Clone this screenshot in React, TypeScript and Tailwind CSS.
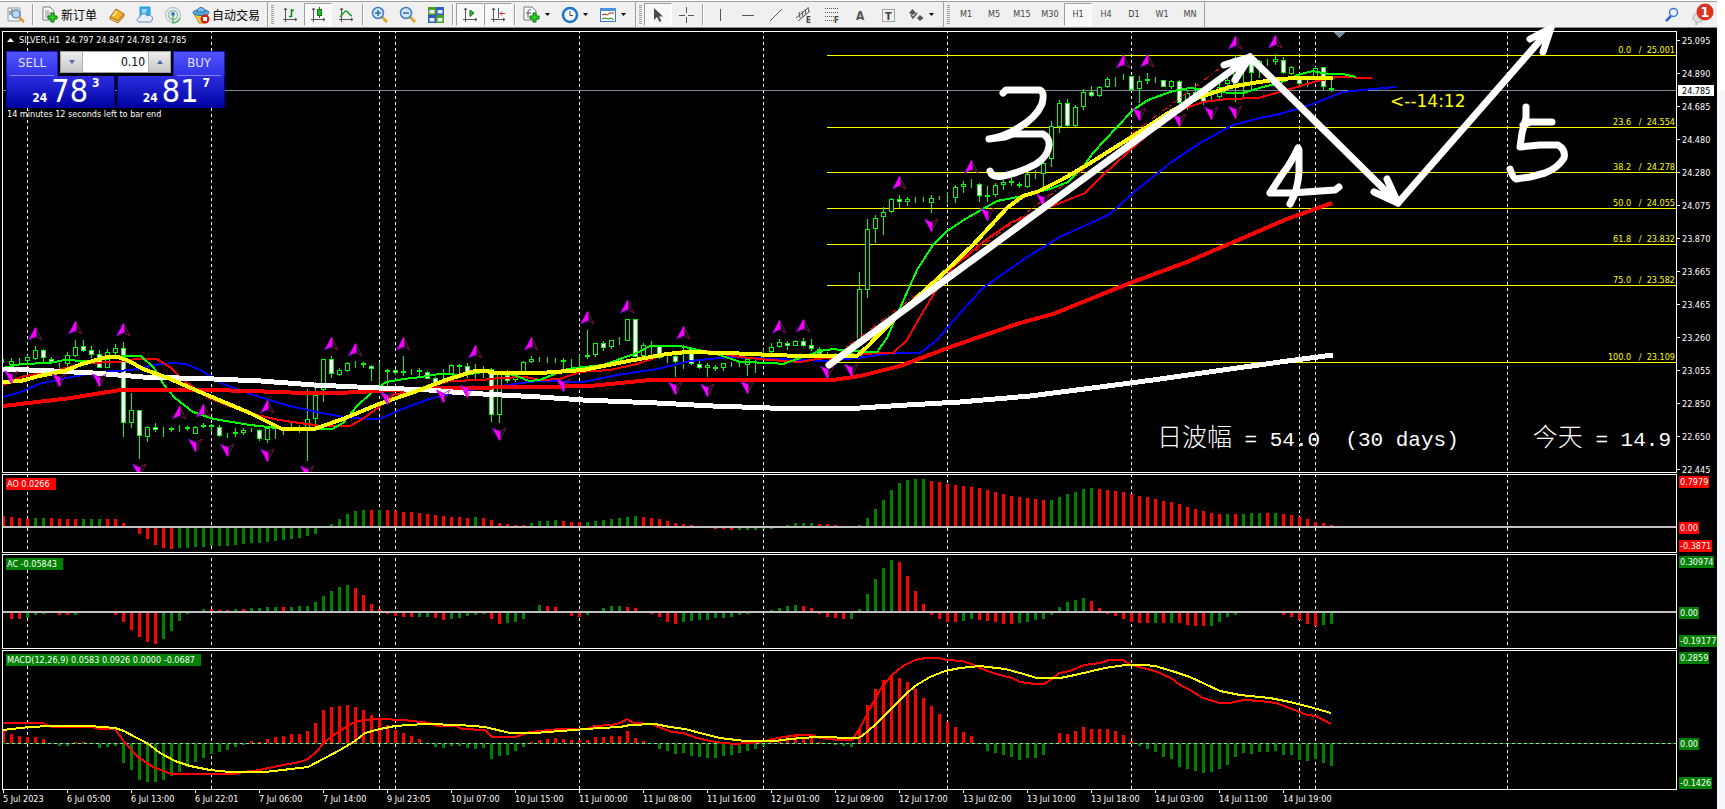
import type { ReactNode } from "react";

type Bar = [high: number, top: number, bottom: number, low: number, filled?: 1];

const STEP = 8;
const barX = (i: number) => 3 + STEP * i;

/**
 * Candles, grouped in runs. `y` is the pixel row a run is measured from, the
 * values inside a run are thirds of a pixel below that row.
 */
const RUNS: { from: number; y: number; bars: Bar[] }[] = [
  {
    from: 0,
    y: 300,
    bars: [
      [178, 184, 184, 190], [175, 184, 194, 200], [175, 184, 184, 190], [165, 172, 182, 190],
      [138, 151, 176, 180], [147, 151, 174, 190, 1], [170, 178, 187, 192, 1], [188, 190, 190, 208],
      [157, 166, 193, 197], [120, 141, 168, 170], [120, 138, 152, 157, 1], [138, 151, 164, 175, 1],
      [151, 163, 204, 205, 1], [147, 157, 203, 205], [133, 145, 158, 165], [126, 144, 368, 410, 1],
      [279, 331, 368, 385], [330, 331, 409, 476, 1], [378, 381, 412, 425], [370, 381, 389, 397, 1],
      [381, 390, 394, 410], [380, 385, 391, 397], [375, 385, 387, 395], [378, 381, 388, 392],
      [378, 381, 401, 402], [368, 375, 382, 384], [373, 376, 381, 395, 1], [376, 381, 409, 412, 1],
      [398, 404, 408, 415], [385, 397, 403, 410], [385, 390, 398, 405], [383, 387, 391, 395],
      [386, 389, 418, 422, 1], [380, 385, 421, 430], [388, 390, 390, 418], [385, 388, 388, 405],
      [370, 388, 388, 392], [375, 386, 390, 398], [268, 358, 388, 482], [245, 285, 358, 375],
      [178, 178, 270, 305], [168, 178, 221, 233, 1], [205, 210, 224, 228], [186, 189, 212, 215],
      [183, 190, 190, 205], [185, 188, 196, 205, 1], [195, 198, 208, 242, 1], [185, 213, 213, 265],
      [207, 211, 215, 262], [207, 210, 219, 225, 1], [167, 213, 219, 228], [207, 214, 214, 225],
      [204, 211, 216, 228, 1], [213, 216, 236, 238, 1], [230, 234, 248, 252, 1], [207, 220, 220, 245],
      [192, 195, 222, 222], [193, 196, 200, 225], [190, 198, 222, 235, 1], [192, 222, 222, 238],
      [198, 222, 222, 235], [205, 208, 344, 365, 1], [215, 220, 344, 368], [210, 225, 242, 250, 1],
      [213, 220, 240, 245], [183, 187, 220, 225], [167, 177, 187, 190], [170, 177, 177, 187],
      [172, 175, 178, 190], [173, 175, 178, 188],
    ],
  },
  {
    from: 70,
    y: 290,
    bars: [
      [205, 211, 217, 240], [207, 208, 210, 235], [195, 203, 206, 240], [120, 196, 202, 207],
      [159, 160, 196, 200], [153, 159, 173, 182, 1], [150, 151, 170, 176], [141, 154, 154, 165],
      [87, 88, 152, 152], [88, 88, 200, 200, 1], [160, 166, 198, 200], [152, 168, 168, 195],
      [165, 169, 205, 208, 1], [195, 203, 206, 218], [196, 199, 217, 260, 1], [165, 190, 190, 237],
      [170, 175, 222, 225, 1], [210, 223, 233, 238, 1], [220, 226, 235, 262], [225, 230, 236, 242, 1],
      [220, 220, 235, 243], [216, 221, 221, 230], [215, 219, 219, 230], [205, 208, 226, 258],
      [205, 210, 210, 248], [178, 188, 188, 210], [160, 172, 187, 188], [148, 157, 172, 173],
      [154, 158, 168, 180, 1], [150, 154, 167, 168], [144, 153, 169, 170, 1], [148, 164, 177, 182, 1],
      [172, 176, 192, 210, 1], [185, 190, 190, 200], [188, 190, 190, 205], [180, 188, 188, 205],
      [185, 188, 200, 205],
    ],
  },
  {
    from: 107,
    y: 30,
    bars: [
      [727, 778, 929, 935], [568, 596, 781, 805], [556, 563, 598, 638], [532, 545, 562, 614],
      [504, 508, 547, 548], [496, 508, 515, 533, 1], [501, 508, 517, 528], [501, 506, 506, 518],
      [501, 506, 506, 515], [496, 505, 520, 550], [498, 503, 503, 510], [485, 503, 503, 520],
      [465, 470, 505, 518], [454, 463, 472, 488], [447, 463, 463, 475], [460, 463, 499, 515, 1],
      [468, 496, 502, 517], [460, 466, 496, 500], [450, 455, 466, 480], [443, 454, 459, 468, 1],
      [455, 462, 468, 473, 1], [430, 433, 472, 473], [420, 431, 431, 448], [390, 400, 433, 475],
      [272, 287, 386, 410], [210, 219, 290, 310], [208, 220, 287, 290, 1], [225, 230, 287, 290],
      [177, 185, 230, 240], [168, 187, 199, 200, 1], [168, 172, 199, 200], [142, 146, 172, 175],
      [142, 149, 154, 170], [133, 147, 147, 150], [137, 139, 179, 182, 1], [138, 154, 178, 218],
      [130, 148, 154, 162], [142, 147, 147, 160], [150, 151, 170, 172, 1], [150, 154, 170, 178],
      [150, 153, 220, 222, 1], [180, 188, 215, 240], [160, 185, 205, 215, 1], [170, 180, 215, 225, 1],
      [180, 190, 190, 215], [160, 170, 200, 210], [140, 150, 163, 175], [75, 85, 170, 215],
      [130, 150, 150, 205], [80, 90, 128, 180, 1], [90, 94, 110, 145], [86, 95, 95, 108],
      [73, 88, 96, 105], [82, 91, 130, 132, 1], [108, 110, 131, 135], [135, 148, 163, 165, 1],
      [140, 150, 150, 170], [112, 113, 140, 150], [110, 112, 172, 180, 1], [150, 175, 179, 185],
    ],
  },
];

// Tip of each fractal arrow
const FRACTALS_UP = [
  [35, 327], [75, 321], [123, 323], [179, 406], [203, 404], [267, 400], [331, 337], [355, 343],
  [403, 337], [475, 345], [531, 337], [587, 311], [627, 300], [683, 326], [779, 320], [803, 319],
  [899, 176], [971, 160], [1123, 55], [1147, 54], [1235, 36], [1275, 35],
];
const FRACTALS_DOWN = [
  [11, 384], [59, 387], [99, 387], [139, 477], [195, 452], [227, 457], [267, 462], [307, 479],
  [387, 405], [443, 403], [467, 398], [499, 441], [563, 392], [675, 395], [707, 397], [747, 394],
  [827, 379], [851, 377], [931, 232], [987, 221], [1043, 207], [1139, 121], [1179, 127],
  [1211, 120], [1235, 119],
];

const MA_WHITE =
  "3,369 54,371 93,373 143,377 214,379 261,381 314,385 379,388 429,390 464,393 540,397 583,400 657,403 713,406 770,408 860,408 907,405 960,402 1030,396 1100,387 1153,380 1230,369 1280,362 1333,355";
const MA_SLOW =
  "3,406 71,398 120,390 211,390 250,391 304,393 339,393 393,390 446,388 540,387 590,386 650,380 833,380 860,376 900,366 953,346 1020,323 1053,314 1130,283 1187,262 1287,219 1332,203";
const MA_YELLOW =
  "3,382 21,381 39,376 64,371 82,364 107,357 118,357 129,361 143,369 168,378 200,392 250,413 282,429 314,429 343,419 379,404 414,392 446,380 475,371 486,371 496,373 540,373 583,370 623,362 667,354 687,352 727,353 773,355 800,356 857,356 867,347 900,313 947,270 973,245 1007,208 1023,196 1037,192 1063,179 1087,165 1130,138 1173,110 1200,97 1230,87 1253,83 1280,79 1297,78 1333,78";
const MA_GREEN =
  "3,368 21,364 50,363 64,360 86,361 107,359 125,356 141,356 154,368 164,385 175,398 193,412 214,419 250,425 286,429 332,429 343,423 357,406 371,393 386,382 404,379 421,377 439,374 464,375 489,371 514,375 529,381 540,380 567,369 603,365 637,353 650,346 680,346 703,351 720,355 740,362 773,363 783,364 797,359 820,351 833,349 850,351 877,352 887,338 900,308 917,270 933,245 947,231 967,218 997,201 1023,196 1050,189 1068,182 1083,167 1093,153 1117,127 1133,110 1148,100 1173,91 1190,88 1207,90 1230,93 1243,93 1263,87 1280,83 1297,75 1313,71 1327,74 1343,74 1356,77";
const MA_RED =
  "3,385 21,377 57,370 86,363 118,362 136,359 157,359 171,368 186,382 207,397 229,406 257,415 279,420 321,426 350,426 364,418 379,407 393,395 421,389 450,381 482,380 500,378 525,377 540,380 560,379 580,372 610,370 637,364 663,355 683,351 707,351 740,357 770,360 800,362 817,359 877,353 893,353 907,340 920,317 935,292 953,267 983,242 1010,223 1037,212 1060,203 1085,193 1103,175 1127,153 1153,130 1183,109 1203,102 1227,99 1258,98 1280,92 1317,81 1337,77 1372,78";
const MA_BLUE =
  "3,397 21,392 39,384 71,377 100,372 132,370 154,365 171,363 186,364 200,370 221,383 250,394 286,405 321,413 350,418 379,419 400,410 429,399 457,392 493,387 529,382 540,381 583,382 617,375 657,369 690,361 730,357 773,359 827,361 857,358 893,353 920,353 937,340 960,313 983,288 1027,257 1060,237 1110,214 1133,193 1170,163 1200,143 1233,125 1260,118 1280,114 1313,104 1343,92 1373,89 1396,87";
const MACD_MAIN =
  "3,723 43,723 51,727 92,727 100,729 115,729 125,743 138,757 153,767 171,774 235,774 243,772 260,770 273,767 300,762 308,759 316,752 324,743 332,736 340,731 349,725 357,721 365,720 380,719 403,720 430,723 437,726 456,726 462,729 485,730 492,737 515,737 530,732 560,729 587,729 595,726 612,725 620,723 627,719 634,723 652,724 661,728 672,732 683,733 697,738 715,742 735,744 760,742 778,738 797,735 811,735 820,738 840,740 852,740 860,728 868,712 880,690 892,675 903,666 915,660 925,658 939,658 947,660 962,661 972,664 987,671 1000,675 1012,678 1020,682 1035,684 1044,684 1052,679 1059,673 1070,671 1084,665 1100,663 1109,660 1123,660 1131,665 1155,671 1171,678 1180,685 1190,690 1203,698 1220,703 1230,703 1243,700 1260,701 1276,703 1292,709 1307,715 1316,716 1331,724";
const MACD_SIGNAL =
  "3,730 30,727 50,726 90,726 115,728 124,731 135,737 147,743 160,753 175,761 190,766 210,770 230,772 265,772 308,767 325,758 340,750 355,741 365,733 380,729 395,726 425,724 460,725 485,727 510,733 535,733 560,731 600,728 620,727 630,725 655,724 670,727 685,729 700,733 720,738 745,741 775,741 790,739 815,737 858,738 862,736 875,725 890,710 905,695 915,686 930,677 945,671 960,668 980,666 1005,669 1020,673 1037,678 1060,678 1075,675 1105,668 1125,665 1145,665 1155,666 1175,672 1190,677 1205,684 1220,691 1240,695 1270,698 1290,702 1310,707 1331,713";

// Signed bar heights; r / g switches the colour for the bars that follow
const AO =
  "r 11 10 9 8 g 9 9 r 9 8 8 8 g 8 8 8 r 8 8 4 0 -7 -12 -18 -21 -22 g -21 -21 -20 -20 -19 -19 -19 -18 -17 -16 -16 -15 -14 -13 -12 -11 -9 -7 -1 3 8 13 16 17 r 17 g 17 r 17 16 15 15 14 13 12 11 10 10 9 g 10 r 9 7 4 3 2 2 g 4 6 6 7 r 6 5 5 g 5 6 7 8 9 10 11 r 10 9 8 6 4 3 2 0 0 -2 -2 -3 g -3 -3 -3 -2 -2 0 2 4 4 4 r 3 3 2 0 0 g 2 9 18 27 37 44 47 48 48 r 46 45 43 42 41 40 39 37 35 33 31 30 29 28 27 g 27 30 33 35 38 39 r 38 37 36 35 33 31 30 28 26 25 23 20 18 16 14 13 g 13 r 13 g 13 14 14 r 14 g 14 r 13 12 10 8 5 4 2";
const AC =
  "r -1 -7 -7 g -6 -3 -2 0 r -3 -3 g -3 0 0 0 0 r -3 -10 -18 -25 -30 -32 g -27 -19 -9 -2 0 3 r 3 2 2 g 3 r 3 g 4 4 5 5 r 5 g 5 6 6 10 16 21 25 27 r 24 17 8 3 -2 -4 -5 -5 g -5 -5 r -6 -8 g -7 -6 -4 -3 -2 r -7 -12 g -11 -10 -7 0 7 r 6 5 0 -4 -5 g -3 0 4 6 6 r 5 4 0 -2 -5 -10 -12 g -10 -9 -8 -8 -6 -6 -5 -3 -2 0 0 2 4 6 7 r 6 4 -2 -5 -6 -7 g -7 3 18 33 44 52 r 50 36 21 8 -3 -7 -10 -10 g -9 -7 r -8 -9 -10 -12 -12 g -11 -10 -8 -7 -3 5 10 12 14 r 11 4 -2 -4 -7 -10 -11 -11 g -11 r -11 g -11 r -11 -13 -14 -14 g -14 -10 -5 -3 0 0 0 0 0 r -3 -5 -8 -12 -14 g -13 -12";
const MACD =
  "13 9 7 6 6 4 0 -3 -3 1 1 0 -5 -4 -3 -20 -27 -37 -39 -39 -37 -33 -29 -24 -19 -15 -11 -9 -7 -4 -2 2 1 4 6 7 9 9 12 20 33 36 37 38 36 33 28 24 18 13 10 7 4 0 -4 -5 -3 -3 -5 -6 -5 -16 -13 -12 -8 -4 1 3 4 5 4 3 3 3 6 6 7 7 12 5 2 0 -6 -8 -11 -10 -13 -14 -15 -15 -13 -12 -10 -8 -6 -3 1 4 6 7 6 5 1 -1 -2 -3 -4 15 38 54 63 67 65 61 54 45 37 29 21 16 11 7 -1 -8 -10 -12 -14 -17 -15 -15 -12 -1 10 9 12 16 14 14 14 12 8 2 -3 -6 -9 -14 -16 -24 -26 -28 -30 -29 -26 -22 -14 -10 -11 -9 -9 -8 -12 -12 -17 -18 -16 -20 -23";

const DAY_BREAKS = [3, 26, 47, 49, 72, 95, 118, 141, 162, 164, 188];

const FIBS = [
  { y: 55, level: "0.0", price: "25.001" },
  { y: 127, level: "23.6", price: "24.554" },
  { y: 172, level: "38.2", price: "24.278" },
  { y: 208, level: "50.0", price: "24.055" },
  { y: 244, level: "61.8", price: "23.832" },
  { y: 285, level: "75.0", price: "23.582" },
  { y: 362, level: "100.0", price: "23.109" },
];

const PRICES = [
  "25.095", "24.890", "24.685", "24.480", "24.280", "24.075", "23.870",
  "23.665", "23.465", "23.260", "23.055", "22.850", "22.650", "22.445",
];

const TIMES = [
  "5 Jul 2023", "6 Jul 05:00", "6 Jul 13:00", "6 Jul 22:01", "7 Jul 06:00", "7 Jul 14:00",
  "9 Jul 23:05", "10 Jul 07:00", "10 Jul 15:00", "11 Jul 00:00", "11 Jul 08:00", "11 Jul 16:00",
  "12 Jul 01:00", "12 Jul 09:00", "12 Jul 17:00", "13 Jul 02:00", "13 Jul 10:00", "13 Jul 18:00",
  "14 Jul 03:00", "14 Jul 11:00", "14 Jul 19:00",
];

/* ---------- chart drawing ---------- */

function DayBreaks() {
  return (
    <g stroke="#fff" strokeDasharray="3 3">
      {DAY_BREAKS.map((i) => (
        <line key={i} x1={barX(i) + 0.5} x2={barX(i) + 0.5} y1="30" y2="790" />
      ))}
    </g>
  );
}

function Candles() {
  return (
    <>
      {RUNS.flatMap((run) =>
        run.bars.map(([high, top, bottom, low, filled], k) => {
          const x = barX(run.from + k);
          const at = (v: number) => Math.round(run.y + v / 3);
          return (
            <g key={run.from + k} stroke="#0f0">
              <line x1={x + 0.5} x2={x + 0.5} y1={at(high)} y2={at(low)} />
              <rect
                x={x - 1.5}
                y={at(top) + 0.5}
                width="4"
                height={Math.max(at(bottom) - at(top) - 1, 0)}
                fill={filled ? "#fff" : "#000"}
              />
            </g>
          );
        }),
      )}
    </>
  );
}

function Fractal({ x, y, down }: { x: number; y: number; down?: boolean }) {
  return (
    <g
      transform={`translate(${x} ${y})${down ? " scale(1 -1)" : ""}`}
      shapeRendering="auto"
      strokeWidth="0.8"
    >
      <path d="M0.5 0.5 L7 13 L1 9.5" fill="none" stroke="#a01070" />
      <path d="M0.5 0 L-6.5 13 L1 9.5 Z" fill="#f0f" stroke="#70c" />
      <path d="M0.5 1 V9.5" stroke="#f0f" strokeWidth="1.5" />
    </g>
  );
}

function Histogram({ data, zero }: { data: string; zero: number }) {
  let color = "";
  let i = -1;
  return (
    <>
      {data.split(" ").map((token, k) => {
        if (token === "r" || token === "g") {
          color = token;
          return null;
        }
        i += 1;
        const v = Number(token);
        const red = color ? color === "r" : v > 0;
        return (
          <rect
            key={k}
            x={barX(i) - 1}
            y={v > 0 ? zero - v : zero}
            width="3"
            height={Math.abs(v)}
            fill={red ? "#f00" : "#008000"}
          />
        );
      })}
    </>
  );
}

function Pane({ title, badge, axis, children }: {
  title: string;
  badge: string;
  axis: { label: string; space: string }[];
  children: ReactNode;
}) {
  return (
    <div className="flex">
      <div className="relative min-w-0 flex-1 border border-white">
        {children}
        <span className={`absolute left-[3px] top-[3px] h-[12px] pl-px pr-[6px] text-[9px] leading-[12px] ${badge}`}>
          {title}
        </span>
      </div>
      <div className="flex w-[40px] flex-col items-start pl-[2px] text-[9px]">
        {axis.map((a) => (
          <span key={a.label} className={`h-[12px] px-px leading-[12px] ${a.space} ${badge}`}>
            {a.label}
          </span>
        ))}
      </div>
    </div>
  );
}

function PriceChart() {
  return (
    <div className="flex">
      <div className="relative min-w-0 flex-1 border border-white">
        <svg className="block h-[440px] w-full" shapeRendering="crispEdges">
          <g transform="translate(-3 -32)">
            <DayBreaks />
            <path d="M1334 32 H1345 L1339.5 38 Z" fill="#778899" />
            <line x1="0" x2="101%" y1="90.5" y2="90.5" stroke="#778899" />
            {FIBS.map((f) => (
              <line key={f.y} x1="827" x2="101%" y1={f.y + 0.5} y2={f.y + 0.5} stroke="#ff0" />
            ))}
            <Candles />
            <line x1="829" y1="360" x2="1235" y2="57" stroke="#f00" strokeDasharray="6 3 1 3" />
            <g fill="none" strokeWidth="2">
              <polyline points={MA_BLUE} stroke="#00f" />
              <polyline points={MA_RED} stroke="#f00" />
              <polyline points={MA_GREEN} stroke="#0f0" />
            </g>
            <g fill="none" strokeWidth="4">
              <polyline points={MA_SLOW} stroke="#f00" />
              <polyline points={MA_WHITE} stroke="#fff" strokeWidth="5" />
              <polyline points={MA_YELLOW} stroke="#ff0" />
            </g>
            {FRACTALS_UP.map(([x, y]) => (
              <Fractal key={`u${x}`} x={x} y={y} />
            ))}
            {FRACTALS_DOWN.map(([x, y]) => (
              <Fractal key={`d${x}`} x={x} y={y} down />
            ))}
            <text x="1390" y="107" className="fill-[#ff0] font-['DejaVu_Sans'] text-[17px]">
              {"<--14:12"}
            </text>
          </g>
          <g transform="translate(-1 -34)" className="fill-[#ff0] text-[9px]">
            {FIBS.map((f) => (
              <text key={f.y} x="100%" y={f.y} textAnchor="end">
                {`${f.level}\u00a0\u00a0\u00a0/\u00a0\u00a0${f.price}`}
              </text>
            ))}
          </g>
        </svg>
        <p className="absolute left-[3px] top-[2px] flex h-[12px] items-center gap-[5px] pl-px text-[9px] leading-[12px] whitespace-pre">
          <svg width="7" height="4" fill="#fff">
            <path d="M0 4 L3.5 0 L7 4 Z" />
          </svg>
          SILVER,H1  24.797 24.847 24.781 24.785
        </p>
        <OneClickTrading />
        <p className="absolute right-[5px] top-[388px] flex gap-[74px] font-['Liberation_Mono','Noto_Sans_CJK_SC',monospace] text-[21px] font-light leading-[40px] whitespace-pre">
          <span>
            <span className="text-[25px]">日波幅</span> = 54.0  (30 days)
          </span>
          <span>
            <span className="text-[25px]">今天</span> = 14.9
          </span>
        </p>
      </div>
      <svg className="block h-[442px] w-[40px] text-[9px]" shapeRendering="crispEdges">
        {PRICES.map((p, i) => (
          <g key={p}>
            <line x1="0" x2="3" y1={9.5 + 33 * i} y2={9.5 + 33 * i} stroke="#fff" />
            <text x="5" y={13 + 33 * i} fill="#fff">
              {p}
            </text>
          </g>
        ))}
        <rect x="1" y="54" width="36" height="11" fill="#fff" />
        <text x="5" y="63" fill="#000">
          24.785
        </text>
      </svg>
    </div>
  );
}

function Quote({ name, big, pips, point }: { name: string; big: string; pips: string; point: string }) {
  return (
    <button
      type="button"
      aria-label={name}
      className="flex h-[32px] flex-1 justify-end gap-[4px] border border-t-0 border-[#0000a0] bg-linear-to-b from-[#2c2ce0] to-[#0000a4] pr-[14px] text-white"
    >
      <b className="self-end text-[12px] leading-[17px]">{big}</b>
      <span className="text-[32px] leading-[30px]">{pips}</span>
      <b className="text-[12px] leading-[15px]">{point}</b>
    </button>
  );
}

function OneClickTrading() {
  const side =
    "h-[25px] w-[52px] border border-b-0 border-[#1818c0] bg-linear-to-b from-[#5252ff] to-[#3030e4] px-[3px] text-[13px] text-[#e4e4ff]";
  const sideText = "block h-full border-b border-[#8080ff] leading-[21px]";
  const spin = "flex w-[21px] items-center justify-center bg-linear-to-b from-[#ececec] to-[#c8c8c8]";
  return (
    <div className="absolute left-[3px] top-[19px] w-[219px]">
      <div className="flex justify-between">
        <button type="button" className={side}>
          <span className={sideText}>SELL</span>
        </button>
        <div className="flex h-[22px] w-[111px] border border-[#a0a0a0] bg-white">
          <button type="button" aria-label="Decrease volume" className={spin}>
            <svg width="6" height="4" fill="#5668b0"><path d="M0 0 H6 L3 4 Z" /></svg>
          </button>
          <input
            aria-label="Volume"
            defaultValue="0.10"
            className="min-w-0 flex-1 border-x border-[#b0b0b0] pr-[3px] text-right text-[12px] text-black"
          />
          <button type="button" aria-label="Increase volume" className={spin}>
            <svg width="6" height="4" fill="#5668b0"><path d="M0 4 H6 L3 0 Z" /></svg>
          </button>
        </div>
        <button type="button" className={side}>
          <span className={sideText}>BUY</span>
        </button>
      </div>
      <div className="flex gap-[2px]">
        <Quote name="Sell at 24.783" big="24" pips="78" point="3" />
        <Quote name="Buy at 24.817" big="24" pips="81" point="7" />
      </div>
      <p className="pl-px text-[9px] leading-[12px]">14 minutes 12 seconds left to bar end</p>
    </div>
  );
}

/* ---------- toolbar ---------- */

function Icon({ children }: { children: ReactNode }) {
  return (
    <svg width="18" height="18" viewBox="0 0 18 18" fill="none" className="shrink-0">
      {children}
    </svg>
  );
}

const axes = <path d="M4.5 2 V16 M2 13.5 H16 M3 4 L4.5 2 L6 4 M14 12 L16 13.5 L14 15" stroke="#555" />;
const plus = <path d="M10 7 H13 V10 H16 V13 H13 V16 H10 V13 H7 V10 H10 Z" fill="#2ecc2e" stroke="#087808" />;

const icons = {
  find: (
    <Icon>
      <path d="M1 2 H13 V15 H1 Z" fill="#f4f4f4" stroke="#999" />
      <path d="M3 5 V9 M5 3 V7 M11 4 V8" stroke="#555" />
      <circle cx="9" cy="8" r="4" fill="#bcd8f2" stroke="#5a8fc0" strokeWidth="1.5" />
      <path d="M12 11 L17 16" stroke="#d8a030" strokeWidth="2.5" />
    </Icon>
  ),
  order: (
    <Icon>
      <path d="M2 1 H9 L13 5 V14 H2 Z" fill="#fff" stroke="#777" />
      <path d="M4 5 H8 M4 7 H11 M4 9 H9 M4 11 H7" stroke="#888" />
      {plus}
    </Icon>
  ),
  book: (
    <Icon>
      <path d="M2 11 L8 3 L16 8 L10 15 Z" fill="#f0b428" stroke="#a86a08" />
      <path d="M2 11 V13 L10 17 L16 10 V8 L10 15 Z" fill="#fbe7a8" stroke="#a86a08" />
      <path d="M5 10 L9 5" stroke="#fde08a" strokeWidth="2" />
    </Icon>
  ),
  cloud: (
    <Icon>
      <path d="M4 1 H14 V10 H4 Z" fill="#38a8e8" stroke="#1c9fe4" />
      <path d="M6 4 H11 M6 6 H10" stroke="#fff" />
      <path d="M3 16 C0 15 1 11 4 11 C5 7 10 7 11 10 C14 8 18 11 16 14 C16 16 14 16 13 16 Z" fill="#e8eefa" stroke="#7088b8" />
    </Icon>
  ),
  signal: (
    <Icon>
      <circle cx="9" cy="9" r="7.5" stroke="#b8ccd8" strokeWidth="1.5" />
      <circle cx="9" cy="9" r="4.5" stroke="#8cc49c" strokeWidth="1.5" />
      <circle cx="9" cy="8" r="2" fill="#3c78c8" />
      <path d="M9 9 V17 A8 8 0 0 0 16 12" stroke="#58b068" strokeWidth="1.5" />
    </Icon>
  ),
  auto: (
    <Icon>
      <path d="M2 8 L7 17 H13 L16 8 Z" fill="#f4cc48" stroke="#b88818" />
      <ellipse cx="9" cy="6.5" rx="8" ry="3" fill="#58a8e0" stroke="#2870a8" />
      <path d="M5 6 C5 0 13 0 13 6 Z" fill="#7cc0ec" stroke="#2870a8" />
      <circle cx="13" cy="13" r="4.5" fill="#d82010" />
      <rect x="11" y="11" width="4" height="4" fill="#fff" />
    </Icon>
  ),
  bars: <Icon>{axes}<path d="M10.5 3 V11 M8 10.5 H10.5 M10.5 4.5 H13" stroke="#0a8a1a" strokeWidth="1.5" /></Icon>,
  candles: (
    <Icon>
      {axes}
      <path d="M10.5 1 V12" stroke="#087818" />
      <rect x="8.5" y="3.5" width="4" height="6" fill="#28b83c" stroke="#087818" />
    </Icon>
  ),
  line: <Icon>{axes}<path d="M3 11 C6 8 7 5 9 5 C11 5 12 9 15 10" stroke="#20a030" strokeWidth="1.5" /></Icon>,
  zoomIn: (
    <Icon>
      <path d="M11 11 L16 16" stroke="#d8a830" strokeWidth="3" />
      <circle cx="7" cy="7" r="5.5" fill="#d4e8fa" stroke="#3c7cc0" strokeWidth="1.5" />
      <path d="M4 7 H10 M7 4 V10" stroke="#2868b0" strokeWidth="1.5" />
    </Icon>
  ),
  zoomOut: (
    <Icon>
      <path d="M11 11 L16 16" stroke="#d8a830" strokeWidth="3" />
      <circle cx="7" cy="7" r="5.5" fill="#d4e8fa" stroke="#3c7cc0" strokeWidth="1.5" />
      <path d="M4 7 H10" stroke="#2868b0" strokeWidth="1.5" />
    </Icon>
  ),
  tile: (
    <Icon>
      <path d="M1 1 H9 V9 H1 Z M9 9 H17 V17 H9 Z" fill="#48a028" />
      <path d="M9 1 H17 V9 H9 Z M1 9 H9 V17 H1 Z" fill="#2c5cc8" />
      <path d="M2.5 4 H7.5 V7.5 H2.5 Z M10.5 4 H15.5 V7.5 H10.5 Z M2.5 12 H7.5 V15.5 H2.5 Z M10.5 12 H15.5 V15.5 H10.5 Z" fill="#e8f0e8" />
    </Icon>
  ),
  scroll: <Icon>{axes}<path d="M9 4 L13 7 L9 10.5 Z" fill="#30c040" stroke="#087818" /></Icon>,
  shift: <Icon>{axes}<path d="M9.5 2 V12" stroke="#2060a8" /><path d="M16 7.5 H11 M13 5.5 L11 7.5 L13 9.5" stroke="#c83010" /></Icon>,
  indicator: (
    <Icon>
      <path d="M1 1 H9 L13 5 V14 H1 Z" fill="#fff" stroke="#777" />
      <path d="M8 4 C6 3 5 4 5 6 V12 M3 7 H8" stroke="#555" />
      {plus}
    </Icon>
  ),
  clock: (
    <Icon>
      <circle cx="9" cy="9" r="7" fill="#f4f8ff" stroke="#1c74d0" strokeWidth="2.5" />
      <path d="M9 5 V9.5 H12" stroke="#444" />
    </Icon>
  ),
  template: (
    <Icon>
      <rect x="1.5" y="2.5" width="15" height="13" fill="#fff" stroke="#3c78c8" />
      <path d="M1 2 H17 V5 H1 Z" fill="#4c90e0" />
      <path d="M3 9 L6 8 L8 9 L11 7 L15 7" stroke="#a02010" />
      <path d="M3 13 L6 12 L9 13 L12 12 L15 14" stroke="#208030" />
    </Icon>
  ),
  cursor: <Icon><path d="M5 2 V14 L8 11 L10.5 16 L12.5 15 L10 10.5 H14 Z" fill="#4a4a4a" /></Icon>,
  cross: <Icon><path d="M9.5 1 V7 M9.5 11 V17 M2 9.5 H8 M11 9.5 H17" stroke="#555" /></Icon>,
  vline: <Icon><path d="M9.5 3 V15" stroke="#555" /></Icon>,
  hline: <Icon><path d="M3 9.5 H15" stroke="#555" /></Icon>,
  trend: <Icon><path d="M3 15 L15 3" stroke="#555" /></Icon>,
  channel: (
    <Icon>
      <path d="M1 12 L13 2 M3 15 L15 5 M4 6 L5 12 M7 5 L8 11 M10 3 L11 9 M13 1 L14 6" stroke="#555" />
      <text x="11" y="17" className="fill-[#444] text-[8px] font-bold">E</text>
    </Icon>
  ),
  fibo: (
    <Icon>
      <path d="M2 2.5 H16 M2 6.5 H16 M2 10.5 H16 M2 14.5 H11" stroke="#555" strokeDasharray="1 1" />
      <text x="11" y="17" className="fill-[#444] text-[8px] font-bold">F</text>
    </Icon>
  ),
  text: <Icon><text x="5" y="14" className="fill-[#555] text-[12px] font-bold">A</text></Icon>,
  label: (
    <Icon>
      <rect x="3.5" y="3.5" width="12" height="12" stroke="#555" strokeDasharray="1 1" />
      <text x="6" y="14" className="fill-[#444] text-[11px] font-bold">T</text>
    </Icon>
  ),
  shapes: (
    <Icon>
      <path d="M2 7 L5.5 3 L9 7 L5.5 9 Z M10 12 L13 9 L16.5 12 L13 15 Z" fill="#555" />
      <path d="M4 9 L6 12 L10 7" stroke="#555" strokeWidth="1.5" />
    </Icon>
  ),
};

const Separator = () => <span className="mx-[2px] h-[21px] w-[2px] border-l border-[#a0a0a0] bg-white" />;

const Grip = () => (
  <span className="flex h-full w-[12px] items-center gap-[3px] pl-[3px]">
    <span className="h-full w-px bg-[#a0a0a0]" />
    <span className="h-[19px] w-[3px] bg-[repeating-linear-gradient(#a0a0a0_0_1px,transparent_1px_2px)]" />
  </span>
);

function Tool({ name, icon, active, menu }: { name: string; icon: ReactNode; active?: boolean; menu?: boolean }) {
  return (
    <button
      type="button"
      aria-label={name}
      className={`flex h-[23px] shrink-0 items-center ${menu ? "w-[38px] gap-[4px] pl-[5px]" : "w-7 justify-center"} ${
        active ? "border border-[#a0a0a0] border-r-white border-b-white bg-[#f8f8f8]" : ""
      }`}
    >
      {icon}
      {menu && <svg width="5" height="3" fill="#000"><path d="M0 0 H5 L2.5 3 Z" /></svg>}
    </button>
  );
}

function Toolbar() {
  const labelled = "flex h-[23px] shrink-0 items-center gap-[2px] pl-[5px] font-['Noto_Sans_CJK_SC',sans-serif] text-[12px] text-black";
  return (
    <header className="bg-white pt-px">
      <div className="flex h-[27px] items-center border-b border-t border-b-[#8c8c8c] border-t-[#a0a0a0] bg-[#f0f0f0] pl-[2px] text-[#444]">
        <Tool name="Data window" icon={icons.find} />
        <Separator />
        <button type="button" className={`${labelled} w-[67px]`}>{icons.order}新订单</button>
        <Tool name="Market" icon={icons.book} />
        <Tool name="VPS" icon={icons.cloud} />
        <Tool name="Signals" icon={icons.signal} />
        <button type="button" className={`${labelled} w-[77px]`}>{icons.auto}自动交易</button>
        <Grip />
        <Tool name="Bar chart" icon={icons.bars} />
        <Tool name="Candlesticks" icon={icons.candles} active />
        <Tool name="Line chart" icon={icons.line} />
        <Separator />
        <Tool name="Zoom in" icon={icons.zoomIn} />
        <Tool name="Zoom out" icon={icons.zoomOut} />
        <Tool name="Tile windows" icon={icons.tile} />
        <Separator />
        <Tool name="Auto scroll" icon={icons.scroll} active />
        <Tool name="Chart shift" icon={icons.shift} active />
        <Separator />
        <Tool name="Indicators" icon={icons.indicator} menu />
        <Tool name="Periods" icon={icons.clock} menu />
        <Tool name="Templates" icon={icons.template} menu />
        <Grip />
        <Tool name="Cursor" icon={icons.cursor} active />
        <Tool name="Crosshair" icon={icons.cross} />
        <Separator />
        <Tool name="Vertical line" icon={icons.vline} />
        <Tool name="Horizontal line" icon={icons.hline} />
        <Tool name="Trendline" icon={icons.trend} />
        <Tool name="Equidistant channel" icon={icons.channel} />
        <Tool name="Fibonacci retracement" icon={icons.fibo} />
        <Tool name="Text" icon={icons.text} />
        <Tool name="Text label" icon={icons.label} />
        <Tool name="Arrows" icon={icons.shapes} menu />
        <Grip />
        {["M1", "M5", "M15", "M30", "H1", "H4", "D1", "W1", "MN"].map((tf) => (
          <button
            key={tf}
            type="button"
            className={`h-[23px] w-7 shrink-0 text-[9px] ${
              tf === "H1" ? "border border-[#a0a0a0] border-r-white border-b-white bg-[#f8f8f8]" : ""
            }`}
          >
            {tf}
          </button>
        ))}
        <span className="h-full w-px bg-[#a0a0a0]" />
        <span className="ml-auto flex shrink-0 items-center gap-[10px] pr-[3px]">
          <button type="button" aria-label="Search">
            <Icon>
              <path d="M3 15 L8 10" stroke="#2c68d0" strokeWidth="2.5" />
              <circle cx="10.5" cy="6.5" r="4" fill="#eef4ff" stroke="#3c78d8" strokeWidth="1.5" />
            </Icon>
          </button>
          <button type="button" aria-label="Notifications">
            <svg width="23" height="23" viewBox="0 0 23 23">
              <path d="M2 15 C2 10 10 8 13 13 C14 18 9 19 7 19 L5 22 V18 C3 18 2 17 2 15" fill="#e0e0e0" stroke="#aaa" />
              <circle cx="14" cy="9" r="8.5" fill="#dc3220" />
              <text x="14" y="14" textAnchor="middle" className="fill-white text-[14px] font-bold">1</text>
            </svg>
          </button>
        </span>
      </div>
    </header>
  );
}

// Hand-drawn wave count on top of everything
function WaveCount() {
  return (
    <svg
      className="pointer-events-none absolute inset-0 h-full w-full"
      fill="none"
      stroke="#fff"
      strokeWidth="7"
      strokeLinecap="round"
      strokeLinejoin="round"
    >
      <path d="M829 365 L1250 57 M1224 65 L1250 57 L1235 80" />
      <path d="M1250 57 L1398 203 M1374 192 L1398 203 L1387 179" />
      <path d="M1398 203 L1551 28 M1530 39 L1551 28 L1543 52" />
      <path d="M1003 93 L1006 90 H1040 Q1045 92 1042 104 Q1036 118 1018 128 Q1004 137 989 139 L1005 137 L1013 134 H1043 Q1050 138 1049 146 Q1048 156 1036 164 Q1022 172 1003 176 Q992 178 990 171" />
      <path d="M1298 148 Q1290 165 1283 173 L1270 193 L1292 193 L1320 191 L1335 190 L1339 187" />
      <path d="M1299 150 V172 Q1298 190 1290 204" />
      <path d="M1526 107 L1526 118 L1522 133 L1520 147 L1540 145 H1558 Q1566 150 1564 158 Q1558 168 1545 173 L1530 177 L1516 179 Q1513 178 1510 169" />
      <path d="M1523 125 L1530 122 H1552" />
    </svg>
  );
}

export default function App() {
  return (
    <div className="relative flex min-h-screen bg-[#f6f7fa] font-['DejaVu_Sans_Condensed','Open_Sans','Noto_Sans_CJK_SC',sans-serif]">
      <div className="flex min-w-0 flex-1 flex-col bg-black text-white">
        <Toolbar />
        <main className="flex flex-col gap-px pl-[2px] pt-[3px]">
          <PriceChart />
          <Pane
            title="AO 0.0266"
            badge="bg-[#f00]"
            axis={[
              { label: "0.7979", space: "mt-[2px]" },
              { label: "0.00", space: "mt-[34px]" },
              { label: "-0.3871", space: "mt-[6px]" },
            ]}
          >
            <svg className="block h-[77px] w-full" shapeRendering="crispEdges">
              <g transform="translate(-3 -475)">
                <DayBreaks />
                <Histogram data={AO} zero={527} />
                <rect x="0" y="526" width="101%" height="2" fill="#c0c0c0" />
              </g>
            </svg>
          </Pane>
          <Pane
            title="AC -0.05843"
            badge="bg-[#008000]"
            axis={[
              { label: "0.30974", space: "mt-[2px]" },
              { label: "0.00", space: "mt-[39px]" },
              { label: "-0.19177", space: "mt-[16px]" },
            ]}
          >
            <svg className="block h-[93px] w-full" shapeRendering="crispEdges">
              <g transform="translate(-3 -555)">
                <DayBreaks />
                <Histogram data={AC} zero={612} />
                <rect x="0" y="611" width="101%" height="2" fill="#c0c0c0" />
              </g>
            </svg>
          </Pane>
          <Pane
            title="MACD(12,26,9) 0.0583 0.0926 0.0000 -0.0687"
            badge="bg-[#008000]"
            axis={[
              { label: "0.2859", space: "mt-[2px]" },
              { label: "0.00", space: "mt-[74px]" },
              { label: "-0.1426", space: "mt-[27px]" },
            ]}
          >
            <svg className="block h-[138px] w-full" shapeRendering="crispEdges">
              <g transform="translate(-3 -651)">
                <DayBreaks />
                <Histogram data={MACD} zero={743} />
                <line x1="0" x2="101%" y1="743.5" y2="743.5" stroke="#008000" />
                <line x1="0" x2="101%" y1="743.5" y2="743.5" stroke="#c0c0c0" strokeDasharray="3 3" />
                <polyline points={MACD_MAIN} fill="none" stroke="#f00" strokeWidth="2" />
                <polyline points={MACD_SIGNAL} fill="none" stroke="#ff0" strokeWidth="2" />
              </g>
            </svg>
          </Pane>
        </main>
        <div className="flex pl-[3px]">
          {TIMES.map((t) => (
            <div key={t} className="w-16 shrink-0 text-[9px] leading-[12px] whitespace-nowrap">
              <span className="block h-[3px] w-px bg-white" />
              {t}
            </div>
          ))}
        </div>
      </div>
      <div className="w-2 shrink-0">
        <div className="h-[90px] bg-white" />
      </div>
      <WaveCount />
    </div>
  );
}
